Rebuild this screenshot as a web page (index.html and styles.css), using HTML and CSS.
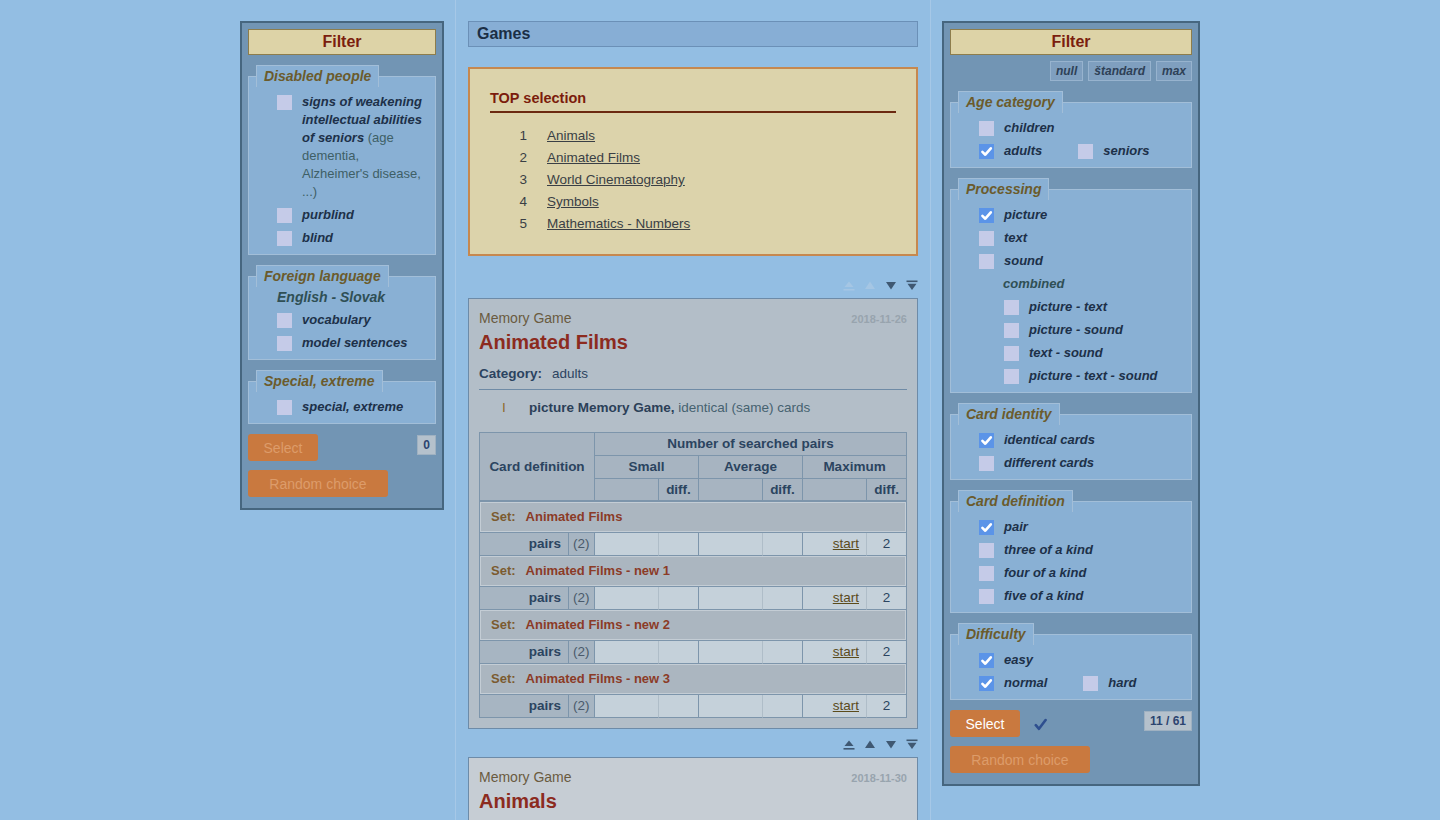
FILE: index.html
```html
<!DOCTYPE html>
<html lang="en">
<head>
<meta charset="utf-8">
<title>Games</title>
<link rel="stylesheet" href="styles.css">
</head>
<body>
<div class="page">
  <aside class="panel panel-left">
    <div class="filter-head">Filter</div>

    <section class="grp">
      <div class="tab">Disabled people</div>
      <div class="box">
        <div class="item"><span class="cb"></span><span class="lbl">signs of weakening intellectual abilities of seniors <span class="note">(age dementia, Alzheimer's disease, ...)</span></span></div>
        <div class="item"><span class="cb"></span><span class="lbl">purblind</span></div>
        <div class="item"><span class="cb"></span><span class="lbl">blind</span></div>
      </div>
    </section>

    <section class="grp">
      <div class="tab">Foreign language</div>
      <div class="box">
        <div class="subhead lang">English - Slovak</div>
        <div class="item"><span class="cb"></span><span class="lbl">vocabulary</span></div>
        <div class="item"><span class="cb"></span><span class="lbl">model sentences</span></div>
      </div>
    </section>

    <section class="grp">
      <div class="tab">Special, extreme</div>
      <div class="box">
        <div class="item"><span class="cb"></span><span class="lbl">special, extreme</span></div>
      </div>
    </section>

    <div class="actions">
      <button class="btn btn-select">Select</button>
      <span class="count">0</span>
    </div>
    <button class="btn btn-random">Random choice</button>
  </aside>

  <main class="center">
    <div class="games-head">Games</div>

    <div class="top-box">
      <div class="top-title">TOP selection</div>
      <ul class="top-list">
        <li><span class="n">1</span><a href="#">Animals</a></li>
        <li><span class="n">2</span><a href="#">Animated Films</a></li>
        <li><span class="n">3</span><a href="#">World Cinematography</a></li>
        <li><span class="n">4</span><a href="#">Symbols</a></li>
        <li><span class="n">5</span><a href="#">Mathematics - Numbers</a></li>
      </ul>
    </div>

    <div class="arrows first">
      <svg class="dim" viewBox="0 0 12 11"><polygon points="1.5,7 6,1.5 10.5,7"/><rect x="0.5" y="9" width="11" height="1.6"/></svg>
      <svg class="dim" viewBox="0 0 12 11"><polygon points="1,9 6,1.5 11,9"/></svg>
      <svg viewBox="0 0 12 11"><polygon points="1,2 11,2 6,9.5"/></svg>
      <svg viewBox="0 0 12 11"><rect x="0.5" y="0.5" width="11" height="1.6"/><polygon points="1.5,3.8 10.5,3.8 6,10"/></svg>
    </div>

    <article class="card">
      <div class="card-meta"><span class="kind">Memory Game</span><span class="date">2018-11-26</span></div>
      <h2 class="card-title">Animated Films</h2>
      <div class="cat"><b>Category:</b>adults</div>
      <div class="desc"><span class="roman">I</span><span><b>picture Memory Game,</b> <span class="plain">identical (same) cards</span></span></div>

      <table class="pairs">
        <colgroup>
          <col style="width:89px"><col style="width:26px">
          <col style="width:64px"><col style="width:40px">
          <col style="width:64px"><col style="width:40px">
          <col style="width:64px"><col style="width:40px">
        </colgroup>
        <thead>
          <tr><th rowspan="3" colspan="2" class="hb">Card definition</th><th colspan="6">Number of searched pairs</th></tr>
          <tr><th colspan="2">Small</th><th colspan="2">Average</th><th colspan="2">Maximum</th></tr>
          <tr class="r3"><th class="hb"></th><th class="hb">diff.</th><th class="hb"></th><th class="hb">diff.</th><th class="hb"></th><th class="hb">diff.</th></tr>
        </thead>
        <tbody>
          <tr class="set"><td colspan="8"><span class="k">Set:</span><span class="v">Animated Films</span></td></tr>
          <tr class="prow"><td class="pl">pairs</td><td class="cnt">(2)</td><td class="d"></td><td class="d g"></td><td class="d"></td><td class="d g"></td><td class="d st"><a href="#">start</a></td><td class="d g num">2</td></tr>
          <tr class="set"><td colspan="8"><span class="k">Set:</span><span class="v">Animated Films - new 1</span></td></tr>
          <tr class="prow"><td class="pl">pairs</td><td class="cnt">(2)</td><td class="d"></td><td class="d g"></td><td class="d"></td><td class="d g"></td><td class="d st"><a href="#">start</a></td><td class="d g num">2</td></tr>
          <tr class="set"><td colspan="8"><span class="k">Set:</span><span class="v">Animated Films - new 2</span></td></tr>
          <tr class="prow"><td class="pl">pairs</td><td class="cnt">(2)</td><td class="d"></td><td class="d g"></td><td class="d"></td><td class="d g"></td><td class="d st"><a href="#">start</a></td><td class="d g num">2</td></tr>
          <tr class="set"><td colspan="8"><span class="k">Set:</span><span class="v">Animated Films - new 3</span></td></tr>
          <tr class="prow"><td class="pl">pairs</td><td class="cnt">(2)</td><td class="d"></td><td class="d g"></td><td class="d"></td><td class="d g"></td><td class="d st"><a href="#">start</a></td><td class="d g num">2</td></tr>
        </tbody>
      </table>
    </article>

    <div class="arrows second">
      <svg viewBox="0 0 12 11"><polygon points="1.5,7 6,1.5 10.5,7"/><rect x="0.5" y="9" width="11" height="1.6"/></svg>
      <svg viewBox="0 0 12 11"><polygon points="1,9 6,1.5 11,9"/></svg>
      <svg viewBox="0 0 12 11"><polygon points="1,2 11,2 6,9.5"/></svg>
      <svg viewBox="0 0 12 11"><rect x="0.5" y="0.5" width="11" height="1.6"/><polygon points="1.5,3.8 10.5,3.8 6,10"/></svg>
    </div>

    <article class="card alt">
      <div class="card-meta"><span class="kind">Memory Game</span><span class="date">2018-11-30</span></div>
      <h2 class="card-title">Animals</h2>
    </article>
  </main>

  <aside class="panel panel-right">
    <div class="filter-head">Filter</div>
    <div class="presets">
      <span class="preset">null</span><span class="preset">štandard</span><span class="preset">max</span>
    </div>

    <section class="grp">
      <div class="tab">Age category</div>
      <div class="box">
        <div class="item"><span class="cb"></span><span class="lbl">children</span></div>
        <div class="row">
          <div class="item"><span class="cb on"><svg viewBox="0 0 15 15"><path d="M3.4 7.9 L6.3 10.7 L11.8 4.3"/></svg></span><span class="lbl">adults</span></div>
          <div class="item"><span class="cb"></span><span class="lbl">seniors</span></div>
        </div>
      </div>
    </section>

    <section class="grp">
      <div class="tab">Processing</div>
      <div class="box">
        <div class="item"><span class="cb on"><svg viewBox="0 0 15 15"><path d="M3.4 7.9 L6.3 10.7 L11.8 4.3"/></svg></span><span class="lbl">picture</span></div>
        <div class="item"><span class="cb"></span><span class="lbl">text</span></div>
        <div class="item"><span class="cb"></span><span class="lbl">sound</span></div>
        <div class="subhead combined">combined</div>
        <div class="sub">
          <div class="item"><span class="cb"></span><span class="lbl">picture - text</span></div>
          <div class="item"><span class="cb"></span><span class="lbl">picture - sound</span></div>
          <div class="item"><span class="cb"></span><span class="lbl">text - sound</span></div>
          <div class="item"><span class="cb"></span><span class="lbl">picture - text - sound</span></div>
        </div>
      </div>
    </section>

    <section class="grp">
      <div class="tab">Card identity</div>
      <div class="box">
        <div class="item"><span class="cb on"><svg viewBox="0 0 15 15"><path d="M3.4 7.9 L6.3 10.7 L11.8 4.3"/></svg></span><span class="lbl">identical cards</span></div>
        <div class="item"><span class="cb"></span><span class="lbl">different cards</span></div>
      </div>
    </section>

    <section class="grp">
      <div class="tab">Card definition</div>
      <div class="box">
        <div class="item"><span class="cb on"><svg viewBox="0 0 15 15"><path d="M3.4 7.9 L6.3 10.7 L11.8 4.3"/></svg></span><span class="lbl">pair</span></div>
        <div class="item"><span class="cb"></span><span class="lbl">three of a kind</span></div>
        <div class="item"><span class="cb"></span><span class="lbl">four of a kind</span></div>
        <div class="item"><span class="cb"></span><span class="lbl">five of a kind</span></div>
      </div>
    </section>

    <section class="grp">
      <div class="tab">Difficulty</div>
      <div class="box">
        <div class="item"><span class="cb on"><svg viewBox="0 0 15 15"><path d="M3.4 7.9 L6.3 10.7 L11.8 4.3"/></svg></span><span class="lbl">easy</span></div>
        <div class="row">
          <div class="item"><span class="cb on"><svg viewBox="0 0 15 15"><path d="M3.4 7.9 L6.3 10.7 L11.8 4.3"/></svg></span><span class="lbl">normal</span></div>
          <div class="item"><span class="cb"></span><span class="lbl">hard</span></div>
        </div>
      </div>
    </section>

    <div class="actions">
      <button class="btn btn-select btn-on">Select</button>
      <svg class="tick" viewBox="0 0 13 13"><path d="M1.8 7.2 L5 10.8 L11.6 2"/></svg>
      <span class="count">11 / 61</span>
    </div>
    <button class="btn btn-random">Random choice</button>
  </aside>
</div>
</body>
</html>
```

FILE: styles.css
```css
* { box-sizing: border-box; }
html, body { margin: 0; height: 100%; }
body {
  background: #93bee3;
  font-family: "Liberation Sans", Arial, Helvetica, sans-serif;
  color: #1d3049;
}
.page {
  display: flex;
  justify-content: center;
  align-items: flex-start;
  gap: 11px;
  height: 100vh;
  overflow: hidden;
}

/* side panels */
.panel {
  flex: none;
  margin-top: 21px;
  background: #7295b4;
  border: 2px solid #46667f;
  padding: 6px 6px 11px;
}
.panel-left { width: 204px; }
.panel-right { width: 258px; }
.filter-head {
  height: 26px;
  line-height: 24px;
  background: #ddd3a7;
  border: 1px solid #8d7d4c;
  color: #7b1e0e;
  font-weight: bold;
  font-size: 16px;
  text-align: center;
}
.presets {
  display: flex;
  justify-content: flex-end;
  gap: 5px;
  margin-top: 6px;
}
.preset {
  height: 20px;
  line-height: 18px;
  padding: 0 5px;
  border: 1px solid #97b3ce;
  background: #7f9fbf;
  color: #2e4157;
  font-size: 12px;
  font-weight: bold;
  font-style: italic;
}
.grp {
  display: flex;
  flex-direction: column;
  align-items: flex-start;
  margin-top: 10px;
}
.tab {
  position: relative;
  z-index: 1;
  margin: 0 0 -11px 8px;
  height: 22px;
  padding: 0 7px;
  line-height: 21px;
  border: 1px solid #a2bed8;
  border-bottom: 0;
  background: #89b0d4;
  color: #6b5b2c;
  font-size: 14px;
  font-weight: bold;
  font-style: italic;
}
.box {
  align-self: stretch;
  background: #89b0d4;
  border: 1px solid #a2bed8;
  padding: 16px 7px 2px 28px;
}
.item {
  display: flex;
  align-items: flex-start;
  margin-bottom: 5px;
  font-size: 13px;
  line-height: 18px;
  font-weight: bold;
  font-style: italic;
  color: #1d3049;
}
.cb {
  flex: none;
  width: 15px;
  height: 15px;
  margin: 1.5px 10px 0 0;
  background: #c5cbe8;
}
.cb.on { background: #5b94e8; }
.cb svg { display: block; width: 15px; height: 15px; }
.cb svg path {
  fill: none;
  stroke: #fff;
  stroke-width: 2.6;
  stroke-linecap: round;
  stroke-linejoin: round;
}
.note {
  font-weight: normal;
  font-style: normal;
  color: #3e5f66;
}
.subhead {
  font-weight: bold;
  font-style: italic;
  color: #2f4f55;
  line-height: 18px;
}
.lang { font-size: 14px; margin: -5px 0 5px; }
.combined { font-size: 13px; margin: 0 0 5px 24px; }
.sub { padding-left: 25px; }
.row { display: flex; }
.row .item + .item { margin-left: 36px; }

.actions {
  display: flex;
  align-items: flex-start;
  margin-top: 10px;
}
.btn {
  display: block;
  height: 27px;
  border: 0;
  border-radius: 3px;
  background: #c9793f;
  font-family: "Liberation Sans", Arial, sans-serif;
  font-size: 14px;
  color: #dd9c6a;
  padding: 0;
  text-align: center;
}
.btn-select { width: 70px; }
.btn-random { width: 140px; margin-top: 9px; }
.btn-on { color: #ffffff; }
.count {
  margin-left: auto;
  margin-top: 1px;
  height: 20px;
  line-height: 18px;
  padding: 0 5px;
  border: 1px solid #9fb1c1;
  background: #b5c1cc;
  color: #2c4470;
  font-size: 12px;
  font-weight: bold;
}
.tick {
  width: 13px;
  height: 13px;
  margin: 8px 0 0 14px;
}
.tick path {
  fill: none;
  stroke: #2e4f8f;
  stroke-width: 2.6;
  stroke-linecap: round;
  stroke-linejoin: round;
}

/* center column */
.center {
  flex: none;
  width: 476px;
  align-self: stretch;
  border-left: 1px solid #a6c8e7;
  border-right: 1px solid #a6c8e7;
  padding: 21px 12px 0;
}
.games-head {
  height: 26px;
  line-height: 24px;
  padding: 0 8px;
  border: 1px solid #6b90b7;
  background: #87aed5;
  color: #1b2e45;
  font-size: 16px;
  font-weight: bold;
}
.top-box {
  margin-top: 20px;
  border: 2px solid #c6884f;
  background: #dcd3ab;
  padding: 20px 20px 19px;
}
.top-title {
  font-size: 14.5px;
  font-weight: bold;
  color: #7b1c0c;
  line-height: 18px;
  padding-bottom: 4px;
  border-bottom: 2px solid #6b2910;
}
.top-list {
  list-style: none;
  margin: 12px 0 0;
  padding: 0;
  font-size: 13.5px;
  line-height: 22px;
  color: #3a3f45;
}
.top-list li { display: flex; }
.top-list .n { width: 37px; text-align: right; margin-right: 20px; }
.top-list a { color: #3a3f45; text-decoration: underline; }

.arrows {
  display: flex;
  justify-content: flex-end;
  gap: 9px;
  height: 11px;
  margin: 24px 0 7px;
}
.arrows.second { margin-top: 10px; }
.arrows svg { display: block; width: 12px; height: 11px; fill: #3f5872; }
.arrows svg.dim { fill: #a5c6e4; }

.card {
  border: 1px solid #6d8ba8;
  background: #b3bec8;
  padding: 10px 10px 10px;
}
.card.alt { background: #c6cdd4; min-height: 120px; }
.card-meta {
  display: flex;
  justify-content: space-between;
  align-items: baseline;
  line-height: 18px;
}
.kind { font-size: 14px; color: #6a5b3f; }
.date { font-size: 11px; font-weight: bold; color: #98a4ae; }
.card-title {
  margin: 2px 0 0;
  font-size: 20px;
  line-height: 24px;
  color: #8c2b1f;
  font-weight: bold;
}
.cat {
  margin-top: 11px;
  padding-bottom: 6px;
  border-bottom: 1px solid #6f8ba6;
  font-size: 13.5px;
  line-height: 18px;
  color: #2b4360;
}
.cat b { margin-right: 10px; }
.desc {
  display: flex;
  margin-top: 9px;
  font-size: 13.5px;
  line-height: 18px;
}
.roman { flex: none; width: 50px; padding-left: 23px; color: #8d6a2d; }
.desc b { color: #2b4058; }
.desc .plain { color: #466270; }

/* table */
.pairs {
  margin-top: 15px;
  width: 428px;
  border-collapse: separate;
  border-spacing: 0;
  table-layout: fixed;
  border-top: 1px solid #7d95ab;
  border-left: 1px solid #7d95ab;
  font-size: 13.5px;
}
.pairs th,
.pairs td {
  border-right: 1px solid #7d95ab;
  border-bottom: 1px solid #7d95ab;
  padding: 0;
  line-height: 22px;
  white-space: nowrap;
}
.pairs th {
  background: #a7b4c1;
  color: #2b4460;
  font-weight: bold;
  text-align: center;
}
.pairs .r3 th { line-height: 21px; }
.pairs .hb { border-bottom-width: 2px; }
.pairs .set td {
  line-height: 30px;
  background: #abb6c0;
  padding-left: 11px;
  box-shadow: inset 1px 1px 0 #c4cdd5, inset -1px -1px 0 #c4cdd5;
  font-weight: bold;
  font-size: 13px;
}
.set .k { color: #7b5b2f; margin-right: 10px; }
.set .v { color: #8b3b27; }
.pairs .pl {
  background: #a7b5c2;
  text-align: right;
  padding-right: 7px;
  font-weight: bold;
  color: #2b4460;
}
.pairs .cnt {
  background: #a7b5c2;
  padding-left: 4px;
  color: #4a5a6b;
}
.pairs .d { background: #c5d1da; border-right-color: #afbdc8; }
.pairs .d.g { border-right-color: #7d95ab; }
.pairs .st { text-align: right; padding-right: 7px; }
.pairs .st a { color: #5b4b1b; text-decoration: underline; }
.pairs .num { text-align: center; color: #2b4460; }
```
